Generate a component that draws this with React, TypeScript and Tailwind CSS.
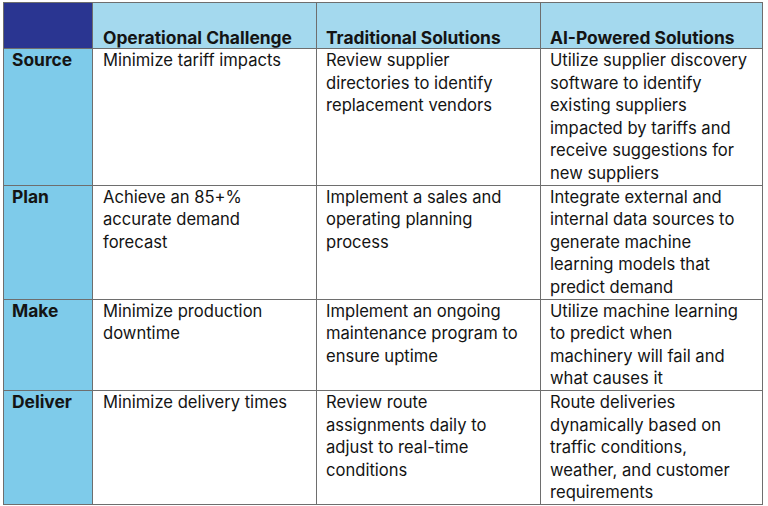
import React from "react";

const rows: { label: string; a: string[]; b: string[]; c: string[] }[] = [
  {
    label: "Source",
    a: ["Minimize tariff impacts"],
    b: ["Review supplier", "directories to identify", "replacement vendors"],
    c: [
      "Utilize supplier discovery",
      "software to identify",
      "existing suppliers",
      "impacted by tariffs and",
      "receive suggestions for",
      "new suppliers",
    ],
  },
  {
    label: "Plan",
    a: ["Achieve an 85+%", "accurate demand", "forecast"],
    b: ["Implement a sales and", "operating planning", "process"],
    c: [
      "Integrate external and",
      "internal data sources to",
      "generate machine",
      "learning models that",
      "predict demand",
    ],
  },
  {
    label: "Make",
    a: ["Minimize production", "downtime"],
    b: ["Implement an ongoing", "maintenance program to", "ensure uptime"],
    c: [
      "Utilize machine learning",
      "to predict when",
      "machinery will fail and",
      "what causes it",
    ],
  },
  {
    label: "Deliver",
    a: ["Minimize delivery times"],
    b: ["Review route", "assignments daily to", "adjust to real-time", "conditions"],
    c: [
      "Route deliveries",
      "dynamically based on",
      "traffic conditions,",
      "weather, and customer",
      "requirements",
    ],
  },
];

function Lines({ lines }: { lines: string[] }) {
  return (
    <>
      {lines.map((l, i) => (
        <div key={i} className="whitespace-nowrap">
          {l}
        </div>
      ))}
    </>
  );
}

export default function App() {
  return (
    <div
      className="w-[768px] h-[506px] bg-white pt-[2px] pl-[3px] text-[#141414]"
      style={{ fontFamily: "Inter, 'Noto Sans', sans-serif" }}
    >
      <div className="grid grid-cols-[89px_224px_224px_222px] w-[760px] border-l border-t border-[#6e6e6e] text-[16.6px] leading-[22.6px]">
        <div className="h-[46px] bg-[#2a3591] border-r border-b border-[#6e6e6e]" />
        <div className="h-[46px] bg-[#a4d9ee] border-r border-b border-[#6e6e6e] flex items-end pl-[10px] font-bold text-[17.4px] leading-[20px] whitespace-nowrap">
          Operational Challenge
        </div>
        <div className="h-[46px] bg-[#a4d9ee] border-r border-b border-[#6e6e6e] flex items-end pl-[9px] font-bold text-[17.4px] leading-[20px] whitespace-nowrap">
          Traditional Solutions
        </div>
        <div className="h-[46px] bg-[#a4d9ee] border-r border-b border-[#6e6e6e] flex items-end pl-[9px] font-bold text-[17.4px] leading-[20px] whitespace-nowrap">
          AI-Powered Solutions
        </div>
        {rows.map((r) => (
          <React.Fragment key={r.label}>
            <div className="bg-[#7ecbea] border-r border-b border-[#6e6e6e] pl-[8px] font-bold text-[17.4px]">
              {r.label}
            </div>
            <div className="border-r border-b border-[#6e6e6e] pl-[10px]">
              <Lines lines={r.a} />
            </div>
            <div className="border-r border-b border-[#6e6e6e] pl-[9px]">
              <Lines lines={r.b} />
            </div>
            <div className="border-r border-b border-[#6e6e6e] pl-[9px]">
              <Lines lines={r.c} />
            </div>
          </React.Fragment>
        ))}
      </div>
    </div>
  );
}
